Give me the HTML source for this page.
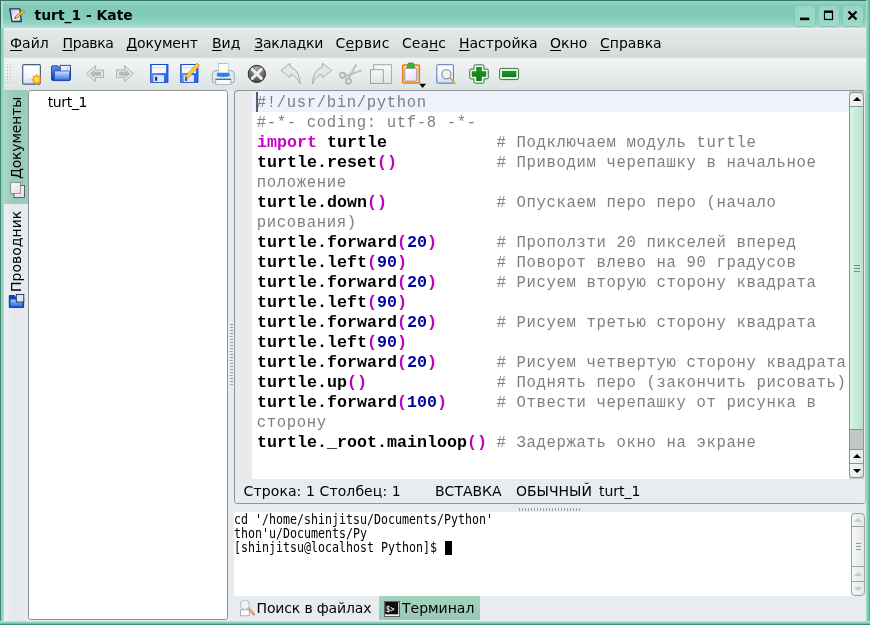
<!DOCTYPE html>
<html lang="ru">
<head>
<meta charset="utf-8">
<title>turt_1 - Kate</title>
<style>
html,body{margin:0;padding:0;}
body{width:870px;height:625px;overflow:hidden;background:#e8ebef;font-family:"DejaVu Sans","Liberation Sans",sans-serif;color:#000;position:relative;}
.abs{position:absolute;}
#win{will-change:transform;position:absolute;left:0;top:0;width:870px;height:625px;background:#e8ebef;overflow:hidden;}
/* window borders */
#bl{left:0;top:28px;width:4px;height:597px;background:linear-gradient(to right,#3f806c 0px,#4f9781 1px,#86d3bc 1.5px,#a2e2cd 4px);}
#br{left:866px;top:0;width:4px;height:625px;background:linear-gradient(to right,#a4e0cd 0px,#86d0ba 1.500px,#6fbfa8 3px,#4a9a82 4px);}
#bb{left:0;top:620.500px;width:870px;height:4.500px;background:linear-gradient(to bottom,#b4ead9 0px,#8fd8c2 1.500px,#6fbfa8 2.500px,#3f8a73 3.500px,#2f6e5b 4.500px);}
#title{left:0;top:0;width:870px;height:28px;background:linear-gradient(to bottom,#357662 0px,#357662 0.800px,#93d5c4 1.200px,#93d5c4 2.200px,#88cebc 4px,#81cab8 8px,#82cbb9 17px,#93d4c3 23px,#a9ded1 27px,#bde5da 28px);}
#title .cap{left:34.500px;top:5px;font-size:13.900px;font-weight:bold;line-height:20px;white-space:nowrap;}
.tb{position:absolute;top:4.500px;width:22px;height:22px;border:1px solid #82c8b5;border-radius:4px;background:linear-gradient(to bottom,#97d5c4,#a0dac9);box-sizing:border-box;}
#menubar{left:4px;top:28px;width:862px;height:30px;background:linear-gradient(to bottom,#eef3f2 0px,#e3e9e8 2px,#dde4e3 14px,#d1dad8 29px,#dce3e2 30px);}
#menubar span{position:absolute;top:5px;font-size:14px;line-height:20px;white-space:nowrap;}
#menubar u{text-decoration:underline;text-underline-offset:2px;text-decoration-thickness:1px;}
#toolbar{left:4px;top:58px;width:862px;height:32px;background:linear-gradient(to bottom,#f1f5f5 0px,#e9eeee 14px,#dce3e3 32px);}
/* sidebar */
#side{left:4px;top:90px;width:24px;height:531px;background:linear-gradient(to right,#eef0f4,#e6e8f0 8px,#e8eaf0);}
.vtab{position:absolute;left:0;width:24px;}
.vtxt{position:absolute;transform-origin:0 0;transform:rotate(-90deg);font-size:14px;line-height:20px;white-space:nowrap;}
#flist{left:28px;top:90px;width:200px;height:530px;background:#fff;border:1px solid #8e9795;box-sizing:border-box;border-radius:3px;}
#flist span{position:absolute;left:18.700px;top:2px;font-size:14px;line-height:18px;letter-spacing:-0.350px;}
/* editor */
#edframe{left:234px;top:90px;width:632px;height:414px;border:1px solid #8e9795;border-right-color:#b9c2c1;box-sizing:border-box;border-radius:4px;background:#e8ebef;}
#edbg{left:252px;top:91px;width:597px;height:388px;background:#fff;}
#iconb{left:237px;top:91px;width:15px;height:388px;background:#ece9ea;}
#curline{left:252px;top:91px;width:597px;height:20.500px;background:#eef2fc;}
#cursor{left:256px;top:92px;width:2px;height:20px;background:#5c5c68;}
#code{left:257px;top:93px;font-family:"Liberation Mono","DejaVu Sans Mono",monospace;font-size:16.670px;line-height:20px;white-space:pre;font-weight:bold;color:#000;margin:0;}
#code .c{color:#808080;font-weight:normal;font-size:15.600px;letter-spacing:0.640px;position:relative;left:-0.300px;}
#code .k{color:#c800c8;}
#code .p{color:#c000c0;}
#code .n{color:#0000a0;}
#status{left:235px;top:479px;width:630px;height:24px;background:#e8ebef;font-size:14px;line-height:22px;white-space:pre;border-radius:0 0 3px 3px;}
#status span{position:absolute;top:1px;}
/* scrollbars */
.sbtn{position:absolute;box-sizing:border-box;border:1px solid #8a9491;background:linear-gradient(to right,#f4f6f6,#e4e8e8);}
.tri{position:absolute;width:0;height:0;border-left:4px solid transparent;border-right:4px solid transparent;}
/* terminal */
#term{left:234px;top:512px;width:617px;height:84px;background:#fff;}
#termtxt{left:234.300px;top:513px;font-family:"DejaVu Sans Mono","Liberation Mono",monospace;font-size:13.300px;line-height:14px;white-space:pre;margin:0;transform-origin:0 0;transform:scaleX(0.8745);}
#tcur{left:445px;top:541px;width:7px;height:14px;background:#000;}
#btabs{left:234px;top:596px;width:632px;height:25px;background:#e8ebef;}
#btabs span{position:absolute;font-size:14px;line-height:20px;top:2px;white-space:nowrap;}
</style>
</head>
<body>
<div id="win">
  <div id="title" class="abs">
    <svg class="abs" style="left:8px;top:6px" width="20" height="20" viewBox="8 6 20 20">
      <defs><linearGradient id="gKate" x1="0" y1="0" x2="1" y2="1"><stop offset="0" stop-color="#b9aef0"/><stop offset="0.550" stop-color="#f4f2ff"/><stop offset="1" stop-color="#c9c2f2"/></linearGradient></defs>
      <path d="M9.800 8.900 h10 l1.500 12.600 h-9.300z" fill="url(#gKate)" stroke="#233466" stroke-width="1.400" stroke-linejoin="round"/>
      <path d="M23.300 9.800 l1.500 1.700 -7.600 6.300 -2.600 0.900 0.900-2.500z" fill="#f4c52e" stroke="#8e6a14" stroke-width="0.700" stroke-linejoin="round"/>
      <path d="M15.500 17.200 l-0.900 1.500 1.600-0.600z" fill="#3a2a6a"/>
    </svg>
    <div class="cap abs">turt_1 - Kate</div>
    <div class="tb" style="left:793.800px"></div>
    <div class="tb" style="left:817.700px"></div>
    <div class="tb" style="left:841.700px"></div>
    <svg class="abs" style="left:790px;top:0" width="80" height="28" viewBox="790 0 80 28">
      <rect x="800" y="17.600" width="9.300" height="2.600" fill="#000"/>
      <rect x="824.500" y="12" width="8" height="7.500" fill="none" stroke="#000" stroke-width="1.200"/>
      <rect x="824" y="10.500" width="9" height="2.200" fill="#000"/>
      <path d="M848.500 11.500 l8 8 M856.500 11.500 l-8 8" stroke="#000" stroke-width="2.300"/>
    </svg>
  </div>
  <div id="menubar" class="abs">
    <span style="left:6px"><u>Ф</u>айл</span>
    <span style="left:58.500px;letter-spacing:-0.400px"><u>П</u>равка</span>
    <span style="left:122.300px;letter-spacing:-0.150px"><u>Д</u>окумент</span>
    <span style="left:208px"><u>В</u>ид</span>
    <span style="left:250.300px;letter-spacing:-0.250px"><u>З</u>акладки</span>
    <span style="left:331.500px;letter-spacing:0.300px">С<u>е</u>рвис</span>
    <span style="left:398px">Сеа<u>н</u>с</span>
    <span style="left:455px"><u>Н</u>астройка</span>
    <span style="left:546px"><u>О</u>кно</span>
    <span style="left:596px"><u>С</u>правка</span>
  </div>
  <div id="toolbar" class="abs"></div>
  <div id="main" class="abs"></div>
<svg id="tbicons" class="abs" style="left:0;top:56px" width="870" height="36" viewBox="0 56 870 36">
<defs>
<linearGradient id="gPage" x1="0" y1="0" x2="0" y2="1"><stop offset="0" stop-color="#ffffff"/><stop offset="0.6" stop-color="#f4f7fd"/><stop offset="1" stop-color="#c9d8f4"/></linearGradient>
<linearGradient id="gFold" x1="0" y1="0" x2="0" y2="1"><stop offset="0" stop-color="#5b93ea"/><stop offset="1" stop-color="#0c3fa8"/></linearGradient>
<linearGradient id="gFpap" x1="0" y1="0" x2="1" y2="1"><stop offset="0" stop-color="#ffffff"/><stop offset="1" stop-color="#b4c0f0"/></linearGradient>
<linearGradient id="gFfront" x1="0" y1="0" x2="0" y2="1"><stop offset="0" stop-color="#cfe4ff"/><stop offset="1" stop-color="#3a7ae6"/></linearGradient>
<linearGradient id="gPap2" x1="0" y1="0" x2="1" y2="1"><stop offset="0" stop-color="#ffffff"/><stop offset="0.500" stop-color="#f6eefc"/><stop offset="1" stop-color="#dcd6f4"/></linearGradient>
<linearGradient id="gFlop" x1="0" y1="0" x2="1" y2="0.300"><stop offset="0" stop-color="#6aa0ff"/><stop offset="1" stop-color="#2f68e4"/></linearGradient>
<radialGradient id="gStop" cx="0.500" cy="0.200" r="0.900"><stop offset="0" stop-color="#a2a2a2"/><stop offset="0.600" stop-color="#666666"/><stop offset="1" stop-color="#3c3c3c"/></radialGradient>
<linearGradient id="gGray" x1="0" y1="0" x2="0" y2="1"><stop offset="0" stop-color="#f8fafa"/><stop offset="1" stop-color="#e0e4e4"/></linearGradient>
<linearGradient id="gGreen" x1="0" y1="0" x2="0" y2="1"><stop offset="0" stop-color="#22962a"/><stop offset="1" stop-color="#117a18"/></linearGradient>
</defs>
<!-- handle dots -->
<g fill="#c2b4b6">
<rect x="7" y="64" width="1" height="1"/><rect x="7" y="67" width="1" height="1"/><rect x="7" y="70" width="1" height="1"/><rect x="7" y="73" width="1" height="1"/><rect x="7" y="76" width="1" height="1"/><rect x="7" y="79" width="1" height="1"/><rect x="7" y="82" width="1" height="1"/>
<rect x="10" y="64" width="1" height="1"/><rect x="10" y="67" width="1" height="1"/><rect x="10" y="70" width="1" height="1"/><rect x="10" y="73" width="1" height="1"/><rect x="10" y="76" width="1" height="1"/><rect x="10" y="79" width="1" height="1"/><rect x="10" y="82" width="1" height="1"/>
</g>
<!-- new -->
<rect x="22.700" y="64.700" width="17.700" height="19.500" rx="1.200" fill="url(#gPage)" stroke="#4d5d78" stroke-width="1.200"/>
<g transform="translate(36.700 79.400)" fill="#f2a02c">
<ellipse rx="1.500" ry="5.300"/><ellipse rx="1.500" ry="5.300" transform="rotate(45)"/><ellipse rx="1.500" ry="5.300" transform="rotate(90)"/><ellipse rx="1.500" ry="5.300" transform="rotate(135)"/>
<circle r="2.600" fill="#ffdf3e"/>
</g>
<!-- open -->
<path d="M51.500 67 q0-1.300 1.300-1.300 h5 l2.300 2.600 h10.400 v11 q0 1.300 -1.300 1.300 h-16.400 q-1.300 0 -1.300-1.300z" fill="url(#gFold)" stroke="#0a349a" stroke-width="0.800"/>
<rect x="60.200" y="65.300" width="10.300" height="9.700" fill="url(#gFpap)" stroke="#1a2a6a" stroke-width="0.800"/>
<rect x="54.500" y="71" width="15" height="9" rx="0.800" fill="url(#gFfront)" stroke="#1648c0" stroke-width="0.700"/>
<!-- back / forward -->
<path d="M86.500 73.700 l9-8 v4.300 h8 v7.400 h-8 v4.300z" fill="#e3e7e7" stroke="#aeb3b3" stroke-width="1" stroke-linejoin="round"/>
<path d="M89.800 73.700 l4.700-4.200 v2.200 h6.500 v4 h-6.500 v2.200z" fill="#b3b8b8"/>
<path d="M133.500 73.700 l-9-8 v4.300 h-8 v7.400 h8 v4.300z" fill="#e3e7e7" stroke="#aeb3b3" stroke-width="1" stroke-linejoin="round"/>
<path d="M130.200 73.700 l-4.700-4.200 v2.200 h-6.500 v4 h6.500 v2.200z" fill="#b3b8b8"/>
<!-- save -->
<rect x="150.700" y="64.500" width="17.200" height="17.800" fill="url(#gFlop)" stroke="#1c4cc8" stroke-width="1"/>
<rect x="152.000" y="65" width="14" height="8" fill="#f4f8ff"/>
<rect x="153.000" y="67.500" width="12" height="0.800" fill="#f0c8e0"/>
<rect x="153.600" y="75.200" width="10.400" height="6.800" fill="#dfe7ff"/>
<rect x="155.000" y="76.800" width="2.200" height="4" fill="#1b2f80"/>
<!-- save as -->
<rect x="180.700" y="64.500" width="17.200" height="17.800" fill="url(#gFlop)" stroke="#1c4cc8" stroke-width="1"/>
<rect x="182.000" y="65" width="14" height="8" fill="#f4f8ff"/>
<rect x="183.000" y="67.500" width="12" height="0.800" fill="#f0c8e0"/>
<rect x="183.600" y="75.200" width="10.400" height="6.800" fill="#dfe7ff"/>
<rect x="185.000" y="76.800" width="2.200" height="4" fill="#1b2f80"/>
<path d="M196.800 63.200 l2.800 2.300 -11.300 12.300 -3.300 1.700 0.900-3.700z" fill="#f8d040" stroke="#c08a18" stroke-width="0.700" stroke-linejoin="round"/>
<path d="M186.900 77.300 l-1.900 2.200 0.500-2.900z" fill="#2a2a4a"/>
<!-- print -->
<rect x="218.500" y="63.500" width="9.500" height="10" fill="#fcfcff" stroke="#a8b0c4" stroke-width="0.800"/>
<path d="M215.500 70.700 h15.500 q3.300 0.300 3.300 3.500 v6.500 q0 2 -2 2 h-18 q-2 0 -2-2 v-6.500 q0-3.200 3.200-3.500z" fill="#e2e8f4" stroke="#8d95a6" stroke-width="0.800"/>
<rect x="218.700" y="64" width="9.100" height="8.800" fill="#fcfcff"/>
<path d="M217.300 72.800 h12 l0.600 3.200 q-6.500 1.800 -13.200 0z" fill="#2a84ea"/>
<rect x="215.800" y="79.300" width="15" height="5" fill="#f8f9fc" stroke="#9aa0ae" stroke-width="0.700"/>
<rect x="215.500" y="78.700" width="15.600" height="1.100" fill="#5e5258"/>
<!-- close -->
<circle cx="256.800" cy="73.900" r="8.600" fill="url(#gStop)" stroke="#2c2c2c" stroke-width="1"/>
<path d="M252.300 69.400 l9 9 M261.300 69.400 l-9 9" stroke="#f0f0f0" stroke-width="2.900" stroke-linecap="round"/>
<!-- undo -->
<path d="M280.800 70.400 L290 63.300 L290.600 67 Q299.500 70 300.200 84.300 Q296.500 75.200 290.800 74.300 L289.900 77.500 Z" fill="#e3e7e7" stroke="#a9aeae" stroke-width="1" stroke-linejoin="round"/>
<!-- redo -->
<path d="M331.700 70.400 L322.500 63.300 L321.900 67 Q313 70 312.300 84.300 Q316 75.200 321.700 74.300 L322.600 77.500 Z" fill="#e3e7e7" stroke="#a9aeae" stroke-width="1" stroke-linejoin="round"/>
<!-- cut -->
<g stroke="#adb2b2" fill="none">
<path d="M356.300 64.200 L348.300 79" stroke-width="2" stroke="#bcc1c1"/>
<path d="M361.500 70.400 L345 76.200" stroke-width="2" stroke="#bcc1c1"/>
<circle cx="342.600" cy="75.200" r="2.700" stroke-width="1.500" fill="#dde1e1"/>
<circle cx="348.400" cy="81.300" r="2.700" stroke-width="1.500" fill="#dde1e1"/>
</g>
<!-- copy -->
<rect x="373.700" y="64.700" width="17.700" height="18.800" fill="url(#gGray)" stroke="#a4a9a9" stroke-width="1"/>
<rect x="370.500" y="69.700" width="12.800" height="13.800" fill="url(#gGray)" stroke="#9da2a2" stroke-width="1"/>
<!-- paste -->
<rect x="402.700" y="65" width="16.600" height="18" rx="1" fill="#fde2a8" stroke="#f07818" stroke-width="1.600"/>
<rect x="404.800" y="68.200" width="12" height="13" rx="1.300" fill="url(#gPap2)" stroke="#8484a6" stroke-width="0.900"/>
<path d="M406.800 67.800 l1.500-4.800 h5 l1.500 4.800z" fill="#34b444" stroke="#1f8a2c" stroke-width="0.600" stroke-linejoin="round"/>
<path d="M419.200 83.800 h6.900 l-3.450 4.100z" fill="#000"/>
<!-- find -->
<rect x="436.800" y="64.700" width="16.600" height="18.500" rx="0.800" fill="url(#gPage)" stroke="#5a72b2" stroke-width="1"/>
<circle cx="446.400" cy="74.300" r="4.600" fill="#f1f3fb" stroke="#92939c" stroke-width="1.300"/>
<path d="M450.200 78.200 l4.600 5.200" stroke="#e2a06a" stroke-width="1.800" stroke-linecap="round"/>
<!-- plus -->
<path d="M475.300 64.800 h7.400 q1.300 0 1.300 1.300 v3 h3 q1.300 0 1.300 1.300 v7.200 q0 1.300 -1.300 1.300 h-3 v3 q0 1.300 -1.300 1.300 h-7.400 q-1.300 0 -1.300-1.300 v-3 h-3 q-1.300 0 -1.300-1.300 v-7.200 q0-1.300 1.300-1.300 h3 v-3 q0-1.300 1.300-1.300z" fill="#e4f8e4" stroke="#2f5f33" stroke-width="0.900"/>
<path d="M476.200 66.900 h5.600 v4.300 h4.400 v5.600 h-4.400 v4.300 h-5.600 v-4.300 h-4.400 v-5.600 h4.400z" fill="url(#gGreen)"/>
<!-- minus -->
<rect x="499.600" y="68.400" width="19" height="11.200" rx="1.800" fill="#e4f8e4" stroke="#2f5f33" stroke-width="0.900"/>
<rect x="502" y="70.900" width="14.300" height="6.200" fill="url(#gGreen)"/>
</svg>

  <div id="side" class="abs">
    <div class="vtab" style="top:0;height:114px;background:linear-gradient(to right,#a8d8c5,#99cab5 10px,#9ccdb8);"></div>
    <div class="vtxt" style="left:2px;top:89px;letter-spacing:-0.200px">Документы</div>
    <div class="vtxt" style="left:2px;top:201.500px;">Проводник</div>
    <svg class="abs" style="left:0;top:90px" width="24" height="132" viewBox="4 180 24 132">
      <defs><linearGradient id="gDoc" x1="0" y1="0" x2="1" y2="1"><stop offset="0" stop-color="#ffffff"/><stop offset="1" stop-color="#ecd4ee"/></linearGradient>
      <linearGradient id="gFo2" x1="0" y1="0" x2="0" y2="1"><stop offset="0" stop-color="#a8ccfa"/><stop offset="1" stop-color="#2a68e4"/></linearGradient></defs>
      <rect x="14" y="185.500" width="10.500" height="12" fill="url(#gDoc)" stroke="#3c4a44" stroke-width="0.800"/>
      <rect x="10.800" y="182.300" width="9.500" height="11" fill="url(#gDoc)" stroke="#55655e" stroke-width="0.600"/>
      <path d="M8.800 296 q0-1 1-1 h4.500 l2 2.500 h7 q0.800 0 0.800 1 v8.500 q0 1-1 1 h-13.300 q-1 0-1-1z" fill="#0d45b8"/>
      <path d="M10.500 299.500 h12 v7 h-12z" fill="url(#gFo2)"/>
      <rect x="16.300" y="294.500" width="7.500" height="7.500" fill="#dfe6f2" stroke="#26324e" stroke-width="0.900"/>
    </svg>
  </div>
  <div id="flist" class="abs"><span>turt_1</span></div>
  <div id="edframe" class="abs"></div>
  <div id="edbg" class="abs"></div>
  <div id="iconb" class="abs"></div>
  <div id="curline" class="abs"></div>
  <div id="cursor" class="abs"></div>
<pre id="code" class="abs"><span class="c">#!/usr/bin/python</span>
<span class="c">#-*- coding: utf-8 -*-</span>
<span class="k">import</span> turtle           <span class="c"># Подключаем модуль turtle</span>
turtle.reset<span class="p">()</span>          <span class="c"># Приводим черепашку в начальное</span>
<span class="c">положение</span>
turtle.down<span class="p">()</span>           <span class="c"># Опускаем перо перо (начало</span>
<span class="c">рисования)</span>
turtle.forward<span class="p">(</span><span class="n">20</span><span class="p">)</span>      <span class="c"># Проползти 20 пикселей вперед</span>
turtle.left<span class="p">(</span><span class="n">90</span><span class="p">)</span>         <span class="c"># Поворот влево на 90 градусов</span>
turtle.forward<span class="p">(</span><span class="n">20</span><span class="p">)</span>      <span class="c"># Рисуем вторую сторону квадрата</span>
turtle.left<span class="p">(</span><span class="n">90</span><span class="p">)</span>
turtle.forward<span class="p">(</span><span class="n">20</span><span class="p">)</span>      <span class="c"># Рисуем третью сторону квадрата</span>
turtle.left<span class="p">(</span><span class="n">90</span><span class="p">)</span>
turtle.forward<span class="p">(</span><span class="n">20</span><span class="p">)</span>      <span class="c"># Рисуем четвертую сторону квадрата</span>
turtle.up<span class="p">()</span>             <span class="c"># Поднять перо (закончить рисовать)</span>
turtle.forward<span class="p">(</span><span class="n">100</span><span class="p">)</span>     <span class="c"># Отвести черепашку от рисунка в</span>
<span class="c">сторону</span>
turtle._root.mainloop<span class="p">()</span> <span class="c"># Задержать окно на экране</span></pre>
  <!-- editor scrollbar -->
  <div id="vsb" class="abs" style="left:849px;top:91px;width:15px;height:388px;background:#c2cbca;">
    <div class="sbtn" style="left:0;top:1px;width:15px;height:15px;border-radius:4px 4px 0 0;"><div class="tri" style="left:2.500px;top:3.500px;border-bottom:4.500px solid #000;"></div></div>
    <div class="abs" style="left:0;top:15px;width:15px;height:324px;box-sizing:border-box;border:1px solid #7d9c8e;background:linear-gradient(to right,#d6f3e6,#c8ebdb 50%,#bde2d1);"></div>
    <div class="abs" style="left:4.500px;top:174px;width:6px;height:1px;background:#6c8c7e;box-shadow:0 3px 0 #6c8c7e,0 6px 0 #6c8c7e;"></div>
    <div class="abs" style="left:0;top:339px;width:15px;height:19px;box-sizing:border-box;border-left:1px solid #8a9491;border-right:1px solid #8a9491;background:#c0c9c8;"></div>
    <div class="sbtn" style="left:0;top:358px;width:15px;height:15px;"><div class="tri" style="left:2.500px;top:4px;border-bottom:4.500px solid #000;"></div></div>
    <div class="sbtn" style="left:0;top:372px;width:15px;height:15px;border-radius:0 0 4px 4px;"><div class="tri" style="left:2.500px;top:5px;border-top:4.500px solid #000;"></div></div>
  </div>
  <div id="status" class="abs"><span style="left:8.600px;letter-spacing:0.100px">Строка: 1 Столбец: 1</span><span style="left:200px">ВСТАВКА</span><span style="left:281px">ОБЫЧНЫЙ</span><span style="left:364px">turt_1</span></div>
  <!-- splitter dots -->
  <div class="abs" style="left:519px;top:508px;width:62px;height:3px;background:repeating-linear-gradient(to right,#98a2a6 0,#98a2a6 1px,transparent 1px,transparent 3px);"></div>
  <div class="abs" style="left:229.500px;top:324px;width:3px;height:62px;background:repeating-linear-gradient(to bottom,#98a2a6 0,#98a2a6 1px,transparent 1px,transparent 3px);"></div>
  <div id="term" class="abs"></div>
<pre id="termtxt" class="abs">cd '/home/shinjitsu/Documents/Python'
thon'u/Documents/Py
[shinjitsu@localhost Python]$ </pre>
  <div id="tcur" class="abs"></div>
  <!-- terminal scrollbar -->
  <div id="tsb" class="abs" style="left:851px;top:513px;width:14px;height:83px;">
    <div class="sbtn" style="left:0;top:0;width:14px;height:14px;border-radius:4px 4px 0 0;border-color:#9aa4a2;"><div class="tri" style="left:2px;top:4px;border-bottom:4px solid #c4cccb;"></div></div>
    <div class="sbtn" style="left:0;top:13px;width:14px;height:41px;border-color:#9aa4a2;"></div>
    <div class="abs" style="left:4.500px;top:29.500px;width:5px;height:1px;background:#8d9795;box-shadow:0 3px 0 #8d9795,0 6px 0 #8d9795;"></div>
    <div class="sbtn" style="left:0;top:53px;width:14px;height:16px;border-color:#9aa4a2;"><div class="tri" style="left:2px;top:5px;border-bottom:4px solid #c4cccb;"></div></div>
    <div class="sbtn" style="left:0;top:68px;width:14px;height:15px;border-radius:0 0 4px 4px;border-color:#9aa4a2;"><div class="tri" style="left:2px;top:5px;border-top:4px solid #c4cccb;"></div></div>
  </div>
  <div id="btabs" class="abs">
    <div class="abs" style="left:144.500px;top:0;width:101px;height:24px;background:linear-gradient(to bottom,#a3d3bf,#98c9b4);"></div>
    <svg class="abs" style="left:4px;top:2px" width="170" height="22" viewBox="238 598 170 22">
      <rect x="240.500" y="609.800" width="8.800" height="6" fill="#fdfdff" stroke="#a4a8b4" stroke-width="0.900"/>
      <circle cx="244.900" cy="604.800" r="4.600" fill="#eef1f5" stroke="#bcc1c7" stroke-width="1.300"/>
      <path d="M248.600 608.600 l5.200 5.800" stroke="#e0a878" stroke-width="2.600" stroke-linecap="round"/>
      <path d="M249.800 609.400 l4.400 4.900" stroke="#b88858" stroke-width="0.800" stroke-linecap="round"/>
      <rect x="384.600" y="601.400" width="15" height="15" fill="#eef0ee" stroke="#3c4a44" stroke-width="0.800"/>
      <rect x="385.200" y="602" width="13" height="12.300" fill="#0c0c0c"/>
      <text x="386" y="611.800" font-family="DejaVu Sans Mono,Liberation Mono,monospace" font-size="8.500" font-weight="bold" fill="#f4f4f4" textLength="8.500" lengthAdjust="spacingAndGlyphs">$&gt;</text>
    </svg>
    <span style="left:22.500px;letter-spacing:-0.150px">Поиск в файлах</span>
    <span style="left:168px">Терминал</span>
  </div>
  <div class="abs" style="left:0;top:0;width:1px;height:28px;background:#2f6e5b;"></div><div class="abs" style="left:1px;top:1px;width:1.500px;height:27px;background:rgba(200,240,228,0.550);"></div>
  <div id="bl" class="abs"></div>
  <div id="br" class="abs"></div>
  <div id="bb" class="abs"></div>
</div>
</body>
</html>
